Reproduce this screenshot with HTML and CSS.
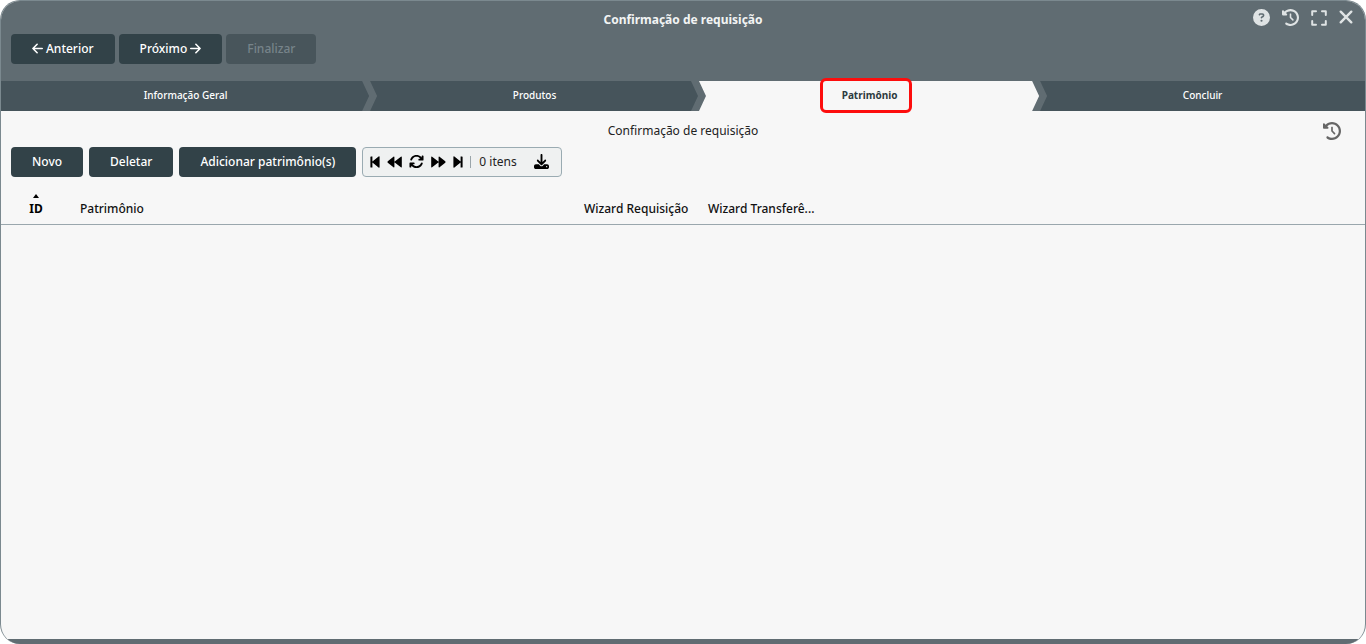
FILE: index.html
```html
<!DOCTYPE html>
<html lang="pt-BR">
<head>
<meta charset="utf-8">
<meta name="viewport" content="width=device-width, initial-scale=1">
<title>Confirmação de requisição</title>
<link rel="stylesheet" href="styles.css">
</head>
<body>
<svg class="sprite" aria-hidden="true">
  <symbol id="history" viewBox="0 0 512 512"><path d="M75 75L41 41C25.9 25.9 0 36.6 0 57.9V168c0 13.3 10.7 24 24 24H134.1c21.4 0 32.1-25.9 17-41l-30.8-30.8C155 85.5 203 64 256 64c106 0 192 86 192 192s-86 192-192 192c-40.8 0-78.6-12.7-109.7-34.4c-14.5-10.1-34.4-6.6-44.6 7.9s-6.6 34.4 7.9 44.6C151.2 495 201.7 512 256 512c141.4 0 256-114.6 256-256S397.4 0 256 0C185.3 0 121.3 28.7 75 75zm181 53c-13.3 0-24 10.7-24 24V256c0 6.4 2.5 12.5 7 17l72 72c9.4 9.4 24.6 9.4 33.9 0s9.4-24.6 0-33.9l-65-65V152c0-13.3-10.7-24-24-24z"/></symbol>
  <symbol id="skip" viewBox="0 0 10 14"><path d="M1 1.500h1.400V6.500L8.600 1.400Q9.600 .8 9.600 2V12Q9.600 13.200 8.600 12.600L2.400 7.500V12.500H1Q.4 12.500 .4 11.900V2.100Q.4 1.500 1 1.500z"/></symbol>
  <symbol id="rewind" viewBox="0 0 16 14"><path d="M7.900 2Q7.900 .7 6.900 1.300L.8 6.200Q.1 7 .8 7.800L6.900 12.700Q7.900 13.300 7.900 12zM15.800 2Q15.800 .7 14.800 1.300L7.900 6.800V7.200L14.800 12.700Q15.800 13.300 15.800 12z"/></symbol>
</svg>
<main class="window">
  <header class="header">
    <div class="titlebar">
      <h1 class="title">Confirmação de requisição</h1>
      <div class="tools">
        <button class="icon-button" aria-label="Ajuda"><svg class="icon-lg" viewBox="0 0 512 512"><path d="M256 512A256 256 0 1 0 256 0a256 256 0 1 0 0 512zM169.800 165.300c7.900-22.300 29.100-37.300 52.800-37.300h58.300c34.900 0 63.100 28.300 63.100 63.100c0 22.600-12.100 43.500-31.700 54.800L280 264.400c-.2 13-10.900 23.600-24 23.600c-13.300 0-24-10.700-24-24V250.500c0-8.600 4.600-16.500 12.100-20.800l44.300-25.400c4.700-2.700 7.600-7.700 7.600-13.100c0-8.400-6.800-15.100-15.100-15.100H222.600c-3.400 0-6.400 2.100-7.500 5.300l-.4 1.200c-4.400 12.500-18.200 19-30.600 14.600s-19-18.200-14.600-30.600l.4-1.200zM224 352a32 32 0 1 1 64 0 32 32 0 1 1 -64 0z"/></svg></button>
        <button class="icon-button" aria-label="Histórico"><svg class="icon-lg"><use href="#history"/></svg></button>
        <button class="icon-button" aria-label="Tela cheia"><svg class="icon-md icon-line" viewBox="0 0 16 16"><path d="M1.200 5V1.200H5M11 1.200h3.800V5M14.800 11v3.800H11M5 14.800H1.200V11"/></svg></button>
        <button class="icon-button close-button" aria-label="Fechar"><svg class="icon-close icon-line" viewBox="0 0 14 14"><path d="M1.700 1.700l10.600 10.600M12.300 1.700L1.700 12.300"/></svg></button>
      </div>
    </div>
    <div class="wizard-actions">
      <button class="button"><svg class="icon-arrow icon-line" viewBox="0 0 12 12"><path d="M11.200 6H1M5.600 1.400L1 6l4.600 4.600"/></svg>Anterior</button>
      <button class="button">Próximo<svg class="icon-arrow icon-line" viewBox="0 0 12 12"><path d="M.8 6H11M6.400 1.400L11 6l-4.600 4.600"/></svg></button>
      <button class="button" disabled>Finalizar</button>
    </div>
  </header>
  <ol class="steps">
    <li class="step">Informação Geral</li>
    <li class="step">Produtos</li>
    <li class="step step-current" aria-current="step">Patrimônio<span class="highlight"></span></li>
    <li class="step">Concluir</li>
  </ol>
  <section class="content">
    <div class="subtitle-row">
      <h2 class="subtitle">Confirmação de requisição</h2>
      <button class="icon-button history-button" aria-label="Histórico"><svg class="icon-xl"><use href="#history"/></svg></button>
    </div>
    <div class="toolbar">
      <button class="button">Novo</button>
      <button class="button">Deletar</button>
      <button class="button">Adicionar patrimônio(s)</button>
      <div class="pager">
        <button class="icon-button" aria-label="Primeira página"><svg class="icon-skip"><use href="#skip"/></svg></button>
        <button class="icon-button" aria-label="Página anterior"><svg class="icon-rewind"><use href="#rewind"/></svg></button>
        <button class="icon-button" aria-label="Atualizar"><svg class="icon-sm" viewBox="0 0 512 512"><path d="M105.100 202.600c7.700-21.800 20.200-42.300 37.800-59.800c62.500-62.500 163.800-62.500 226.300 0L386.300 160H352c-17.700 0-32 14.300-32 32s14.300 32 32 32H463.900c17.700 0 32-14.300 32-32V80c0-17.700-14.300-32-32-32s-32 14.300-32 32v35.200L414.400 97.600c-87.500-87.500-229.300-87.500-316.800 0C73.200 122 55.600 150.700 44.800 181.400c-5.900 16.700 2.900 34.900 19.500 40.800s34.900-2.900 40.800-19.500zM39 289.300c-5 1.500-9.800 4.200-13.700 8.200c-4 4-6.700 8.800-8.100 14c-.3 1.200-.6 2.500-.8 3.800c-.3 1.700-.4 3.400-.4 5.100V432c0 17.700 14.300 32 32 32s32-14.300 32-32V396.900l17.600 17.500c87.500 87.400 229.300 87.400 316.700 0c24.400-24.400 42.100-53.100 52.900-83.700c5.900-16.700-2.900-34.900-19.500-40.800s-34.900 2.900-40.800 19.500c-7.700 21.800-20.200 42.300-37.800 59.800c-62.500 62.500-163.800 62.500-226.300 0l-.1-.1L125.600 352H160c17.700 0 32-14.300 32-32s-14.300-32-32-32H48.400c-1.600 0-3.200 .1-4.800 .3s-3.100 .5-4.600 1z"/></svg></button>
        <button class="icon-button" aria-label="Próxima página"><svg class="icon-rewind flip"><use href="#rewind"/></svg></button>
        <button class="icon-button" aria-label="Última página"><svg class="icon-skip flip"><use href="#skip"/></svg></button>
        <span class="count">0 itens</span>
        <button class="icon-button" aria-label="Baixar"><svg class="icon-sm" viewBox="0 0 512 512"><path d="M288 32c0-17.700-14.300-32-32-32s-32 14.300-32 32V274.700l-73.400-73.400c-12.500-12.500-32.800-12.500-45.300 0s-12.500 32.800 0 45.300l128 128c12.500 12.500 32.800 12.500 45.300 0l128-128c12.500-12.500 12.500-32.800 0-45.300s-32.800-12.500-45.300 0L288 274.700V32zM64 352c-35.300 0-64 28.700-64 64v32c0 35.300 28.700 64 64 64H448c35.300 0 64-28.700 64-64V416c0-35.300-28.700-64-64-64H346.500l-45.300 45.300c-25 25-65.500 25-90.500 0L165.500 352H64zm368 56a24 24 0 1 1 0 48 24 24 0 1 1 0-48z"/></svg></button>
      </div>
    </div>
    <table class="grid">
      <colgroup><col class="col-id"><col class="col-asset"><col class="col-wizard"><col class="col-wizard"><col></colgroup>
      <thead>
        <tr>
          <th class="sorted" scope="col" aria-sort="ascending"><span class="sort-arrow"></span>ID</th>
          <th scope="col">Patrimônio</th>
          <th scope="col">Wizard Requisição</th>
          <th scope="col">Wizard Transferê...</th>
          <td></td>
        </tr>
      </thead>
    </table>
  </section>
  <footer class="footer"></footer>
</main>
</body>
</html>
```
FILE: styles.css
```css
* { box-sizing: border-box; }

body {
  margin: 0;
  background: #fff;
  color: #222;
  font-family: "Noto Sans", sans-serif;
  font-size: 12px;
  line-height: 16px;
}

.sprite { position: absolute; width: 0; height: 0; }
svg { display: block; fill: currentColor; }

.window {
  display: flex;
  flex-direction: column;
  min-height: 100vh;
  overflow: hidden;
  border: 1px solid #7b898f;
  border-bottom: 0;
  border-radius: 20px;
  background: #f7f7f7;
}

.header {
  padding: 0 10px 17px;
  background: #606c72;
}

.titlebar {
  display: grid;
  grid-template-columns: 1fr auto 1fr;
  align-items: center;
  height: 33px;
}

.title {
  grid-column: 2;
  margin: 0;
  padding-top: 4px;
  color: #f2f4f4;
  font-size: 12px;
  font-weight: 700;
}

.tools {
  display: flex;
  align-items: center;
  justify-content: flex-end;
  gap: 12px;
  padding-right: 2px;
  color: #dfe3e4;
}

.icon-button {
  padding: 0;
  border: 0;
  background: none;
  color: inherit;
  cursor: pointer;
}

.icon-xl { width: 18px; height: 18px; }
.icon-lg { width: 17px; height: 17px; }
.icon-md { width: 16px; height: 16px; }
.icon-sm { width: 15px; height: 15px; }
.icon-close { width: 14px; height: 14px; }
.icon-arrow { width: 11px; height: 11px; }
.icon-skip { width: 10px; height: 14px; }
.icon-rewind { width: 15px; height: 14px; }
.icon-line {
  fill: none;
  stroke: currentColor;
  stroke-width: 2;
  stroke-linecap: round;
  stroke-linejoin: round;
}
.icon-line.icon-arrow { stroke-width: 1.7; }
.icon-line.icon-close { stroke-width: 2.4; }
.flip { transform: rotate(180deg); }
.close-button { padding-bottom: 2px; }

.wizard-actions { display: flex; gap: 4px; }

.button {
  display: inline-flex;
  align-items: center;
  gap: 3px;
  height: 30px;
  padding: 0 21px 1px;
  border: 0;
  border-radius: 4px;
  background: #324248;
  color: #fff;
  font: 500 12px/16px "Noto Sans", sans-serif;
  cursor: pointer;
}

.button:disabled {
  background: #48555b;
  color: #77848a;
  cursor: default;
}

.steps {
  display: flex;
  margin: 0;
  padding: 0;
  list-style: none;
  font-size: 10px;
  font-weight: 500;
  line-height: 28px;
  text-align: center;
}

.step {
  position: relative;
  flex: 1 1 auto;
  padding-bottom: 2px;
  background: #46545b;
  color: #fff;
}

.step:not(:last-child)::after {
  content: "";
  position: absolute;
  z-index: 1;
  top: 0;
  right: -7px;
  width: 15px;
  height: 30px;
  background: #606c72;
  clip-path: polygon(0 0, 8px 0, 100% 50%, 8px 100%, 0 100%, 7px 50%);
}

.step-current {
  background: #f7f7f7;
  color: #2c3a40;
  font-weight: 700;
}

.highlight {
  position: absolute;
  top: -3px;
  left: calc(50% - 50px);
  width: 92px;
  height: 35px;
  border: 3px solid #fd0d0d;
  border-radius: 6px;
}

.content { flex: 1; }

.footer {
  height: 5px;
  background: #606c72;
}

.subtitle-row {
  display: grid;
  grid-template-columns: 1fr auto 1fr;
  align-items: center;
  height: 36px;
  padding: 4px 24px 0;
}

.subtitle {
  grid-column: 2;
  margin: 0;
  font-size: 12px;
  font-weight: 400;
}

.history-button { justify-self: end; color: #666; }

.toolbar {
  display: flex;
  gap: 6px;
  padding: 0 10px;
}

.pager {
  display: flex;
  align-items: center;
  gap: 7px;
  height: 30px;
  padding: 0 12px 1px 7px;
  border: 1px solid #9aabb2;
  border-radius: 4px;
  background: #eff1f1;
  color: #000;
}

.count {
  margin-right: 10px;
  padding-left: 8px;
  border-left: 1px solid #9aa5aa;
  color: #222;
  line-height: 12px;
}

.grid {
  width: 100%;
  margin-top: 14px;
  table-layout: fixed;
  border-collapse: collapse;
  border-bottom: 1px solid #9aa7ad;
}

.col-id { width: 70px; }
.col-asset { width: 504px; }
.col-wizard { width: 124px; }

.grid th {
  padding: 10px 0 7px 9px;
  color: #111;
  font-weight: 500;
  line-height: 16px;
  text-align: left;
  white-space: nowrap;
}

.grid .sorted {
  position: relative;
  padding-left: 0;
  color: #000;
  font-weight: 700;
  text-align: center;
}

.sort-arrow {
  position: absolute;
  top: 3px;
  left: calc(50% - 3px);
  border: 3px solid transparent;
  border-top: 0;
  border-bottom: 4px solid #000;
}
```
